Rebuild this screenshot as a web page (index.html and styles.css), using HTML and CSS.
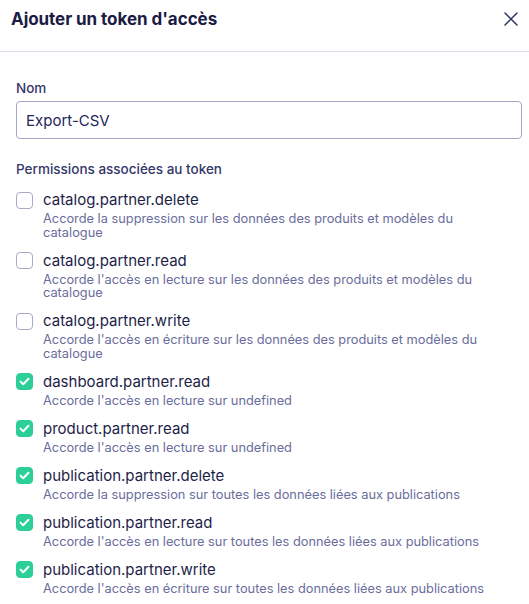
FILE: index.html
```html
<!DOCTYPE html>
<html lang="fr">
<head>
<meta charset="utf-8">
<link rel="stylesheet" href="styles.css">
</head>
<body>
<div class="modal">
  <header class="head">
    <h1 class="title">Ajouter un token d'accès</h1>
    <button class="close" aria-label="Fermer">
      <svg width="14" height="14" viewBox="0 0 14 14"><path d="M1 1L13 13M13 1L1 13" stroke="#2f3163" stroke-width="1.5" stroke-linecap="round"/></svg>
    </button>
  </header>
  <div class="body">
    <label class="label">Nom</label>
    <div class="input">Export-CSV</div>
    <div class="label perm">Permissions associées au token</div>
    <ul class="list">
      <li class="item"><span class="box"></span><div><div class="name">catalog.partner.delete</div><div class="desc">Accorde la suppression sur les données des produits et modèles du catalogue</div></div></li>
      <li class="item"><span class="box"></span><div><div class="name">catalog.partner.read</div><div class="desc">Accorde l'accès en lecture sur les données des produits et modèles du catalogue</div></div></li>
      <li class="item"><span class="box"></span><div><div class="name">catalog.partner.write</div><div class="desc">Accorde l'accès en écriture sur les données des produits et modèles du catalogue</div></div></li>
      <li class="item"><span class="box on"><svg width="11" height="9" viewBox="0 0 11 9"><path d="M1.5 4.6L4.2 7.2L9.5 1.8" fill="none" stroke="#fff" stroke-width="2" stroke-linecap="round" stroke-linejoin="round"/></svg></span><div><div class="name">dashboard.partner.read</div><div class="desc">Accorde l'accès en lecture sur undefined</div></div></li>
      <li class="item"><span class="box on"><svg width="11" height="9" viewBox="0 0 11 9"><path d="M1.5 4.6L4.2 7.2L9.5 1.8" fill="none" stroke="#fff" stroke-width="2" stroke-linecap="round" stroke-linejoin="round"/></svg></span><div><div class="name">product.partner.read</div><div class="desc">Accorde l'accès en lecture sur undefined</div></div></li>
      <li class="item"><span class="box on"><svg width="11" height="9" viewBox="0 0 11 9"><path d="M1.5 4.6L4.2 7.2L9.5 1.8" fill="none" stroke="#fff" stroke-width="2" stroke-linecap="round" stroke-linejoin="round"/></svg></span><div><div class="name">publication.partner.delete</div><div class="desc">Accorde la suppression sur toutes les données liées aux publications</div></div></li>
      <li class="item"><span class="box on"><svg width="11" height="9" viewBox="0 0 11 9"><path d="M1.5 4.6L4.2 7.2L9.5 1.8" fill="none" stroke="#fff" stroke-width="2" stroke-linecap="round" stroke-linejoin="round"/></svg></span><div><div class="name">publication.partner.read</div><div class="desc">Accorde l'accès en lecture sur toutes les données liées aux publications</div></div></li>
      <li class="item"><span class="box on"><svg width="11" height="9" viewBox="0 0 11 9"><path d="M1.5 4.6L4.2 7.2L9.5 1.8" fill="none" stroke="#fff" stroke-width="2" stroke-linecap="round" stroke-linejoin="round"/></svg></span><div><div class="name">publication.partner.write</div><div class="desc">Accorde l'accès en écriture sur toutes les données liées aux publications</div></div></li>
    </ul>
  </div>
</div>
</body>
</html>
```
FILE: styles.css
```css
* { box-sizing: border-box; }
html, body { margin: 0; padding: 0; background: #fff; }
body { font-family: "Inter", "Noto Sans", sans-serif; color: #1c1d47; }
.modal { width: 529px; }
.head {
  display: flex; align-items: center; justify-content: space-between;
  height: 52px; padding: 0 11px 14px 11px;
  border-bottom: 1px solid #dcdde8;
}
.title { margin: 0; font-size: 17px; font-weight: 700; letter-spacing: -0.05px; color: #1b1c45; }
.close { border: 0; background: none; padding: 0; width: 14px; height: 14px; display: flex; }
.body { padding: 27px 7px 0 16px; }
.label { display: block; font-size: 13.5px; font-weight: 500; color: #34376a; line-height: 18px; }
.input {
  margin-top: 4px; height: 38px; border: 1px solid #a5a8c4; border-radius: 4px;
  padding: 0 9px; display: flex; align-items: center; font-size: 15px; color: #24265a;
}
.perm { margin-top: 21px; }
.list { list-style: none; margin: 10px 0 0 0; padding: 0; }
.item { display: flex; gap: 10px; margin-bottom: 9.5px; padding-right: 20px; }
.box {
  flex: none; width: 17px; height: 17px; margin-top: 3.5px; border: 1px solid #a8abc6;
  border-radius: 4px; display: flex; align-items: center; justify-content: center;
}
.box.on { background: #2dcf98; border-color: #2dcf98; }
.name { font-size: 15px; line-height: 24px; color: #1d1e48; }
.desc { font-size: 12.8px; line-height: 13.5px; color: #6a6d9c; }
```
